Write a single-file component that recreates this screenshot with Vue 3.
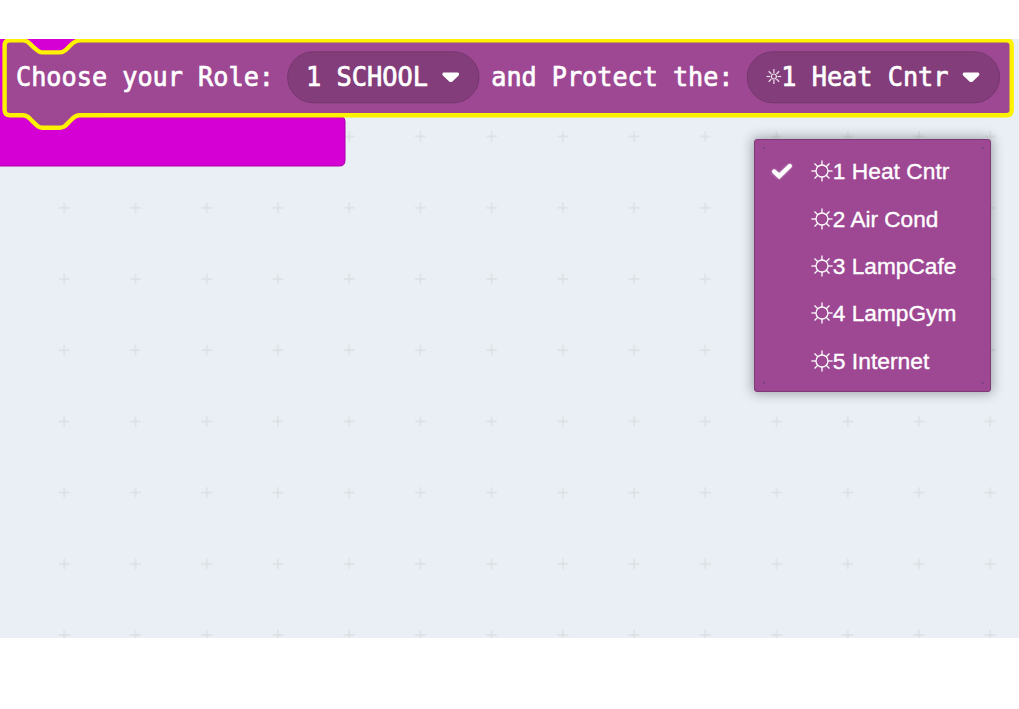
<script setup>
const options = ['1 Heat Cntr', '2 Air Cond', '3 LampCafe', '4 LampGym', '5 Internet']
const widths = [118, 107, 125, 125, 98]
const rays = [0, 45, 90, 135, 180, 225, 270, 315]
const labels = [
  { text: 'Choose your Role:', x: 16, w: 258 },
  { text: '1 SCHOOL', x: 306, w: 122 },
  { text: 'and Protect the:', x: 491.3, w: 242.2 },
  { text: '1 Heat Cntr', x: 781.3, w: 167.2 },
]
const block =
  'M4.6 45.5 Q4.6 40.4 9.8 40.4 H23 C28 40.4 29.5 43.5 32 45.8 L37 50.2 Q39.5 52.4 42 52.4 H60 Q63 52.4 65.5 50.2 L71 44.8 Q75.5 40.4 80 40.4 H1006.5 Q1011.7 40.4 1011.7 45.5 V110 Q1011.7 115.2 1006.5 115.2 H80 Q75.5 115.2 71 120 L65.5 125.6 Q63 127.8 60 127.8 H42 Q39.5 127.8 37 125.6 L32 120.8 C29.5 118.5 28 115.2 23 115.2 H9.8 Q4.6 115.2 4.6 110 Z'
</script>

<template>
  <main class="page">
    <section class="workspace">
      <svg class="canvas" width="1019" height="599" viewBox="0 39 1019 599">
        <defs>
          <pattern id="grid" x="28.7" y="100.9" width="71.22" height="71.22" patternUnits="userSpaceOnUse">
            <path d="M30.2 35.6h10.8M35.6 30.2v10.8" stroke="#dadfe1" stroke-width="1.3" />
          </pattern>
        </defs>
        <rect y="110" width="1019" height="528" fill="url(#grid)" />
        <path d="M-5 30H100V117H341Q345 117 345 121V160.5Q345 166 339.5 166H-5Z" fill="#d400d4" stroke="#aa00aa" />
        <path :d="block" fill="#9e4894" stroke="#fff200" stroke-width="4.4" stroke-linejoin="round" />
        <g fill="#833d7a" stroke="#763770">
          <rect x="287.6" y="51.8" width="191.4" height="51" rx="25.5" />
          <rect x="747.3" y="51.8" width="252.3" height="51" rx="25.5" />
        </g>
        <text
          v-for="l in labels"
          :key="l.text"
          class="label"
          :x="l.x"
          y="86"
          :textLength="l.w"
          lengthAdjust="spacingAndGlyphs"
        >{{ l.text }}</text>
        <g fill="#fff">
          <path d="M444 72.6H457.5C459.2 72.6 459.7 74.5 458.4 75.8L452.7 81.2Q450.8 83 448.9 81.2L443.1 75.8C441.8 74.5 442.3 72.6 444 72.6Z" />
          <path transform="translate(520.3 0)" d="M444 72.6H457.5C459.2 72.6 459.7 74.5 458.4 75.8L452.7 81.2Q450.8 83 448.9 81.2L443.1 75.8C441.8 74.5 442.3 72.6 444 72.6Z" />
        </g>
        <g transform="translate(773.9 76.5)" fill="none" stroke="#eadfe9" stroke-width="1.2">
          <circle r="2.5" />
          <path v-for="r in rays" :key="r" d="M3.6 0H7.4" :transform="`rotate(${r})`" />
        </g>
      </svg>

      <ul class="menu">
        <li v-for="(option, i) in options" :key="option" class="item">
          <span class="mark">
            <svg v-if="i === 0" class="check" width="24" height="20" viewBox="0 0 24 20">
              <path d="M4.2 10.6L9.2 15.2L19.8 5" fill="none" stroke="#fff" stroke-width="4.4" stroke-linecap="round" />
            </svg>
          </span>
          <svg class="sun" width="22" height="22" viewBox="-11 -11 22 22">
            <circle r="6" />
            <path v-for="r in rays" :key="r" d="M6 0H10.6" :transform="`rotate(${r})`" />
          </svg>
          <svg class="name" :width="widths[i]" height="30">
            <text x="-0.2" y="23" :textLength="widths[i] - 1.5" lengthAdjust="spacingAndGlyphs">{{ option }}</text>
          </svg>
        </li>
      </ul>
    </section>
  </main>
</template>

<style>
body {
  margin: 0;
  background: #fff;
}
</style>

<style scoped>
.page {
  height: 709px;
  padding-top: 39px;
  box-sizing: border-box;
  overflow: hidden;
}
.workspace {
  position: relative;
  width: 1019px;
  height: 599px;
  overflow: hidden;
  background: #eaeff6;
}
.canvas {
  display: block;
}
.label {
  font: 27px 'DejaVu Sans Mono', monospace;
  fill: #fff;
  stroke: #fff;
  stroke-width: 0.7px;
  white-space: pre;
}
.menu {
  position: absolute;
  left: 754px;
  top: 100.4px;
  width: 237.4px;
  height: 253px;
  box-sizing: border-box;
  margin: 0;
  padding: 7.3px 0 0;
  list-style: none;
  background: #9e4894;
  border: 1px solid #7e3976;
  border-radius: 3px;
  box-shadow: 0 0 12px 2px rgba(0, 0, 0, 0.3);
}
.menu::before,
.menu::after {
  content: '';
  position: absolute;
  left: 8px;
  width: 217px;
  height: 2px;
  border: solid #81427d;
  border-width: 0 2px;
}
.menu::before {
  top: 7px;
}
.menu::after {
  bottom: 7px;
}
.item {
  display: flex;
  align-items: center;
  height: 47.3px;
}
.mark {
  width: 56px;
  height: 20px;
}
.check {
  display: block;
  margin-left: 15px;
  filter: drop-shadow(0 0 1px #fff8);
}
.sun {
  fill: none;
  stroke: #fff;
  stroke-width: 1.3;
}
.name {
  overflow: visible;
  font: 22.8px 'Liberation Sans', Arial, sans-serif;
  fill: #fff;
  stroke: #fff;
  stroke-width: 0.35px;
}
</style>
